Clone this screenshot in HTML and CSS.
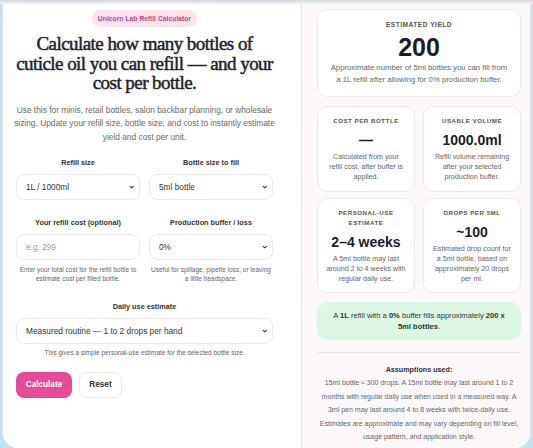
FILE: index.html
```html
<!DOCTYPE html>
<html lang="en">
<head>
<meta charset="utf-8">
<title>Unicorn Lab Refill Calculator</title>
<link rel="stylesheet" href="styles.css">
</head>
<body>
<div class="topshade"></div>
<main class="card">
  <section class="left">
    <div class="badge-row"><span class="badge">Unicorn Lab Refill Calculator</span></div>
    <h1 class="title">Calculate how many bottles of cuticle oil you can refill — and your cost per bottle.</h1>
    <p class="intro">Use this for minis, retail bottles, salon backbar planning, or wholesale sizing. Update your refill size, bottle size, and cost to instantly estimate yield and cost per unit.</p>
    <div class="grid2">
      <div class="field">
        <label class="label">Refill size</label>
        <div class="select"><span>1L / 1000ml</span><svg class="chev" viewBox="0 0 10 6"><path d="M1.5 1.2 5 4.6 8.5 1.2" fill="none" stroke="#333" stroke-width="1.9"/></svg></div>
      </div>
      <div class="field">
        <label class="label">Bottle size to fill</label>
        <div class="select"><span>5ml bottle</span><svg class="chev" viewBox="0 0 10 6"><path d="M1.5 1.2 5 4.6 8.5 1.2" fill="none" stroke="#333" stroke-width="1.9"/></svg></div>
      </div>
      <div class="field">
        <label class="label">Your refill cost (optional)</label>
        <div class="select input"><span class="ph">e.g. 299</span></div>
        <p class="help">Enter your total cost for the refill bottle to estimate cost per filled bottle.</p>
      </div>
      <div class="field">
        <label class="label">Production buffer / loss</label>
        <div class="select"><span>0%</span><svg class="chev" viewBox="0 0 10 6"><path d="M1.5 1.2 5 4.6 8.5 1.2" fill="none" stroke="#333" stroke-width="1.9"/></svg></div>
        <p class="help">Useful for spillage, pipette loss, or leaving a little headspace.</p>
      </div>
    </div>
    <div class="field wide">
      <label class="label">Daily use estimate</label>
      <div class="select"><span>Measured routine — 1 to 2 drops per hand</span><svg class="chev" viewBox="0 0 10 6"><path d="M1.5 1.2 5 4.6 8.5 1.2" fill="none" stroke="#333" stroke-width="1.9"/></svg></div>
      <p class="help">This gives a simple personal-use estimate for the selected bottle size.</p>
    </div>
    <div class="buttons">
      <button class="btn primary">Calculate</button>
      <button class="btn ghost">Reset</button>
    </div>
  </section>
  <aside class="right">
    <div class="stat big">
      <div class="stat-label">Estimated yield</div>
      <div class="stat-value xl">200</div>
      <p class="stat-desc">Approximate number of 5ml bottles you can fill from a 1L refill after allowing for 0% production buffer.</p>
    </div>
    <div class="pair">
      <div class="stat">
        <div class="stat-label">Cost per bottle</div>
        <div class="stat-value">—</div>
        <p class="stat-desc">Calculated from your refill cost, after buffer is applied.</p>
      </div>
      <div class="stat">
        <div class="stat-label">Usable volume</div>
        <div class="stat-value">1000.0ml</div>
        <p class="stat-desc">Refill volume remaining after your selected production buffer.</p>
      </div>
      <div class="stat">
        <div class="stat-label">Personal-use estimate</div>
        <div class="stat-value">2–4 weeks</div>
        <p class="stat-desc">A 5ml bottle may last around 2 to 4 weeks with regular daily use.</p>
      </div>
      <div class="stat">
        <div class="stat-label">Drops per 5ml</div>
        <div class="stat-value">~100</div>
        <p class="stat-desc">Estimated drop count for a 5ml bottle, based on approximately 20 drops per ml.</p>
      </div>
    </div>
    <div class="summary">A <b>1L</b> refill with a <b>0%</b> buffer fills approximately <b>200 x 5ml bottles</b>.</div>
    <hr class="rule">
    <div class="assume">
      <div class="assume-title">Assumptions used:</div>
      <p class="assume-text">15ml bottle ≈ 300 drops. A 15ml bottle may last around 1 to 2 months with regular daily use when used in a measured way. A 3ml pen may last around 4 to 8 weeks with twice-daily use. Estimates are approximate and may vary depending on fill level, usage pattern, and application style.</p>
    </div>
  </aside>
</main>
</body>
</html>
```
FILE: styles.css
```css
* { box-sizing: border-box; }
html, body { margin: 0; padding: 0; }
body {
  background: #bfe3f3;
  font-family: "Liberation Sans", Arial, sans-serif;
  color: #333;
  height: 448px;
  overflow: hidden;
}
.topshade {
  height: 4px;
  background: linear-gradient(#d3d5e0, #f3f3f7);
}
.card {
  margin: 0 2px;
  height: 444px;
  display: grid;
  grid-template-columns: 299px 1fr;
  background: #fff;
  border-left: 1px solid #f1dde4;
  border-right: 1px solid #f1dde4;
  border-radius: 0 0 16px 16px;
  overflow: hidden;
}
.left {
  background: #fff;
  padding: 6px 28px 0 13px;
  border-right: 1px solid #efe4e8;
}
.badge-row { display: flex; justify-content: center; }
.badge {
  background: #fde3ee;
  color: #cf3c86;
  font-weight: 700;
  font-size: 6.8px;
  line-height: 9px;
  padding: 4px 6px;
  border-radius: 9px;
}
.title {
  font-family: "Liberation Serif", "Times New Roman", serif;
  font-weight: 400;
  font-size: 19px;
  letter-spacing: -0.55px;
  line-height: 19.5px;
  text-align: center;
  color: #1f1f2a;
  margin: 7px -3px 0;
  -webkit-text-stroke: 0.5px #1f1f2a;
}
.intro {
  font-size: 8.35px;
  line-height: 13.5px;
  color: #6a6a6a;
  text-align: center;
  margin: 11px -4px 0;
}
.grid2 {
  display: grid;
  grid-template-columns: 1fr 1fr;
  column-gap: 9px;
  row-gap: 17px;
  margin-top: 13px;
}
.field { display: flex; flex-direction: column; }
.field.wide { margin-top: 17px; }
.label {
  font-size: 7.3px;
  line-height: 11px;
  font-weight: 700;
  color: #333;
  text-align: center;
  margin-bottom: 6px;
}
.select {
  height: 26px;
  border: 1px solid #ece7ea;
  border-radius: 8px;
  background: #fff;
  display: flex;
  align-items: center;
  justify-content: space-between;
  padding: 0 5px 0 9px;
  font-size: 8.3px;
  color: #333;
}
.ph { color: #9a9a9a; }
.chev { width: 5.5px; height: 4px; }
.help {
  font-size: 6.5px;
  line-height: 9.5px;
  color: #666;
  text-align: center;
  margin: 4.5px 0 0;
}
.buttons {
  display: flex;
  gap: 7px;
  margin-top: 14px;
}
.btn {
  height: 26px;
  border-radius: 8px;
  font-family: "Liberation Sans", Arial, sans-serif;
  font-size: 8.2px;
  font-weight: 700;
  padding: 0;
}
.btn.primary { background: #e84a96; color: #fff; border: none; width: 56px; }
.btn.ghost { background: #fff; color: #333; border: 1px solid #ece7ea; width: 43px; }
.right {
  background: #fdf8f9;
  padding: 5px 9px 0 15px;
}
.stat {
  background: #fff;
  border: 1px solid #eee8ea;
  border-radius: 10px;
  padding: 9px 8px 8px;
  text-align: center;
}
.stat.big { padding: 10px 12px 10px; }
.stat-label {
  font-size: 6.2px;
  letter-spacing: 0.5px;
  text-transform: uppercase;
  color: #555;
  font-weight: 700;
  line-height: 10px;
}
.big .stat-label { font-size: 6.6px; }
.stat-value {
  font-size: 14px;
  font-weight: 700;
  color: #1c1c28;
  margin-top: 5px;
  line-height: 18px;
}
.stat-value.xl { font-size: 25px; line-height: 26px; margin-top: 4px; }
.stat-desc {
  font-size: 7.15px;
  line-height: 10.2px;
  color: #666;
  margin: 3px 0 0;
}
.big .stat-desc { line-height: 12px; font-size: 7.75px; margin-top: 2px; }
.pair {
  display: grid;
  grid-template-columns: 1fr 1fr;
  column-gap: 8px;
  row-gap: 6px;
  margin-top: 9px;
}
.summary {
  margin-top: 9px;
  background: #dcf8e4;
  border-radius: 10px;
  padding: 7.5px 10px;
  font-size: 7.6px;
  line-height: 11.5px;
  text-align: center;
  color: #333;
}
.summary b { color: #1f3a2a; }
.rule {
  border: none;
  border-top: 1px solid #ebe3e6;
  margin: 12px 0 0;
}
.assume { text-align: center; margin-top: 11px; }
.assume-title { font-size: 7.2px; line-height: 12px; font-weight: 700; color: #333; }
.assume-text {
  font-size: 7px;
  line-height: 13.5px;
  color: #666;
  margin: 0;
}
```
